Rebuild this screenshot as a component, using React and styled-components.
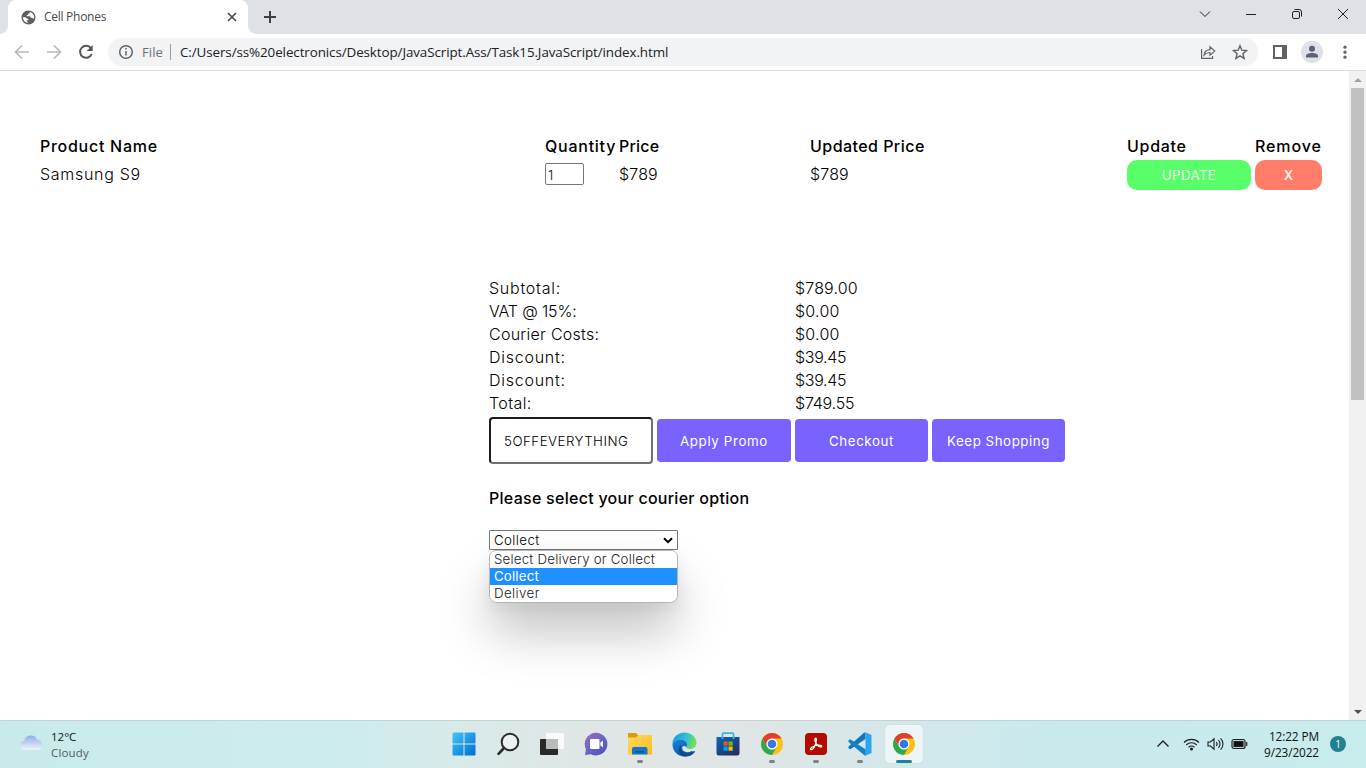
import React from "react";
import styled, { createGlobalStyle, css } from "styled-components";

const GlobalStyle = createGlobalStyle`
  * { box-sizing: border-box; }
  body { margin: 0; background: #fff; overflow: hidden; }
  svg { display: block; flex: none; }
`;

const Screen = styled.div`
  width: 1366px;
  height: 768px;
  display: flex;
  flex-direction: column;
  overflow: hidden;
  background: #fff;
  font-family: "Open Sans", "Noto Sans", sans-serif;
`;

/* Browser frame */
const TabStrip = styled.header`
  height: 34px;
  flex: none;
  display: flex;
  background: #dee1e6;
  padding-left: 8px;
`;
const Tab = styled.div`
  position: relative;
  width: 240px;
  height: 34px;
  background: #fff;
  border-radius: 8px 8px 0 0;
  display: flex;
  align-items: center;
  padding: 0 10px 0 13px;
  &::before, &::after {
    content: "";
    position: absolute;
    bottom: 0;
    width: 8px;
    height: 8px;
  }
  &::before { left: -8px; background: radial-gradient(circle at 0 0, transparent 7.5px, #fff 8px); }
  &::after { right: -8px; background: radial-gradient(circle at 100% 0, transparent 7.5px, #fff 8px); }
`;
const TabTitle = styled.span`
  flex: 1;
  margin-left: 8px;
  font-size: 12px;
  line-height: 16px;
  letter-spacing: -0.27px;
  color: #45494d;
`;
const NewTab = styled.div`
  margin: 10px 0 0 15px;
`;
const WindowButtons = styled.div`
  margin-left: auto;
  display: flex;
  height: 28px;
`;
const WindowButton = styled.div`
  width: 46px;
  display: grid;
  place-items: center;
`;
const Toolbar = styled.div`
  height: 37px;
  flex: none;
  display: flex;
  align-items: center;
  border-bottom: 1px solid #d9dbde;
  padding-left: 13px;
`;
const NavIcon = styled.div`
  width: 32px;
`;
const AddressBar = styled.div`
  margin-left: -1px;
  width: 1150px;
  height: 28px;
  border-radius: 14px;
  background: #f1f3f4;
  display: flex;
  align-items: center;
  padding: 0 10px 0 10px;
`;
const Scheme = styled.span`
  width: 28px;
  margin-left: 8px;
  font-size: 13px;
  letter-spacing: 0.1px;
  color: #6b7075;
`;
const Divider = styled.i`
  width: 1px;
  height: 16px;
  background: #9a9ea3;
`;
const Url = styled.span`
  flex: 1;
  margin-left: 9px;
  font-size: 13.4px;
  letter-spacing: -0.09px;
  color: #202124;
  white-space: nowrap;
`;
const AddressActions = styled.div`
  display: flex;
  gap: 15px;
`;
const Avatar = styled.div`
  width: 22px;
  height: 22px;
  margin: 0 20px 0 14px;
  border-radius: 50%;
  background: #dee1e6;
  display: grid;
  place-items: center;
`;
const PanelIcon = styled.div`
  width: 14px;
  height: 14px;
  margin-left: 15px;
  border: 2px solid #5f6368;
  border-right-width: 5px;
`;

/* Page */
const Viewport = styled.div`
  height: 649px;
  flex: none;
  display: flex;
`;
const Page = styled.main`
  width: 1349px;
  padding: 64px 0 0 40px;
  font-family: Inter, "Open Sans", sans-serif;
  font-size: 16px;
  color: #000;
`;
const text = css`
  letter-spacing: ${(p) => p.$track || 0}px;
  white-space: nowrap;
`;
const CartGrid = styled.section`
  display: grid;
  grid-template-columns: 505px 74px 191px 317px 128px 67px;
  grid-template-rows: 25px 30px;
  align-items: center;
`;
const Heading = styled.span`
  ${text}
  padding-bottom: 3px;
  font-weight: 500;
  font-size: 16px;
`;
const Value = styled.span`
  ${text}
  font-weight: 300;
`;
const CartValue = styled(Value)`
  padding-bottom: 2px;
`;
const QuantityInput = styled.input`
  width: 39px;
  height: 22px;
  margin-bottom: 2px;
  border: 1px solid #767676;
  border-radius: 2px;
  padding: 2px 2px 0;
  font: 300 13.3px Inter, sans-serif;
  color: #111;
  outline: none;
`;
const RowButton = styled.button`
  width: ${(p) => p.$width}px;
  height: 30px;
  border: 0;
  border-radius: 10px;
  background: ${(p) => p.$color};
  color: rgba(255, 255, 255, 0.92);
  font: ${(p) => p.$weight || 400} 13.3px Inter, sans-serif;
  padding: 0;
  ${text}
`;
const Checkout = styled.section`
  margin: 86px 0 0 449px;
`;
const TotalsGrid = styled.div`
  display: grid;
  grid-template-columns: 306px 1fr;
  grid-auto-rows: 23px;
  align-items: center;
`;
const Actions = styled.div`
  display: flex;
  align-items: center;
  gap: 4px;
  margin-top: 3px;
`;
const PromoInput = styled.input`
  width: 164px;
  height: 47px;
  border: 2px solid;
  border-color: #1d1d1d #707070 #707070 #1d1d1d;
  border-radius: 4px;
  padding: 0 13px;
  font: 300 13.3px Inter, sans-serif;
  letter-spacing: ${(p) => p.$track}px;
  color: #000;
  outline: none;
`;
const ActionButton = styled.button`
  width: ${(p) => p.$width || 133}px;
  height: 43px;
  border: 0;
  border-radius: 4px;
  background: #7863ff;
  color: #fff;
  font: 400 13.3px Inter, sans-serif;
  padding: 0;
  ${text}
`;
const CourierTitle = styled.h4`
  ${text}
  margin: 23px 0 20px;
  font-size: 16px;
  line-height: 23px;
  font-weight: 500;
`;
const Select = styled.div`
  position: relative;
  width: 189px;
  height: 20px;
  border: 1px solid #767676;
  border-radius: 1px;
  display: flex;
  align-items: center;
  justify-content: space-between;
  padding: 0 3px 0 4px;
  font-size: 13.3px;
  font-weight: 300;
`;
const Menu = styled.div`
  position: absolute;
  left: -1px;
  top: 19px;
  width: 189px;
  border: 1px solid #b4b4b4;
  border-radius: 7px 7px 8px 8px;
  background: #fff;
  overflow: hidden;
  box-shadow: 0 30px 50px -2px rgba(0, 0, 0, 0.26), 0 6px 14px rgba(0, 0, 0, 0.07);
`;
const Option = styled.div`
  ${text}
  height: 17px;
  line-height: 17px;
  padding-left: 4px;
  background: ${(p) => (p.$active ? "#1e90ff" : "#fff")};
  color: ${(p) => (p.$active ? "#fff" : "#222")};
  font-weight: ${(p) => (p.$active ? 400 : 300)};
`;
const Scrollbar = styled.aside`
  width: 17px;
  background: #f1f1f1;
  display: flex;
  flex-direction: column;
  align-items: center;
`;
const ScrollThumb = styled.div`
  width: 13px;
  height: 312px;
  background: #c1c1c1;
  margin-bottom: auto;
`;
const ScrollArrow = styled.div`
  height: 17px;
  display: grid;
  place-items: center;
`;

/* Taskbar */
const Taskbar = styled.footer`
  height: 48px;
  flex: none;
  display: flex;
  align-items: center;
  border-top: 1px solid #c2d4d4;
  padding-bottom: 1px;
  background: linear-gradient(90deg, #c8ebea 0, #cdeced 25%, #d8eaea 33%, #e0e6e6 43%, #e0e5e5 54%, #d6e7e9 64%, #c9eaed 76%, #c8ebec 100%);
`;
const Weather = styled.div`
  width: 443px;
  display: flex;
  align-items: center;
  padding: 1px 0 0 19px;
  gap: 7px;
  font-size: 11.5px;
  line-height: 16px;
  color: #111;
`;
const Muted = styled.div`
  color: #4d5c5c;
  letter-spacing: 0.15px;
`;
const TaskApp = styled.div`
  position: relative;
  width: 38px;
  height: 38px;
  margin: 0 6px 0 0;
  flex: none;
  display: grid;
  place-items: center;
  border-radius: 4px;
  margin-left: ${(p) => (p.$first ? 2 : 0)}px;
  background: ${(p) => (p.$active ? "#edf5f6" : "transparent")};
  box-shadow: ${(p) => (p.$active ? "0 0 1px #a9bbbd" : "none")};
  ${(p) => p.$mark && css`
    &::after {
      content: "";
      position: absolute;
      left: 50%;
      bottom: 0;
      height: 3px;
      width: ${p.$active ? 16 : 6}px;
      transform: translateX(-50%);
      border-radius: 2px;
      background: ${p.$active ? "#1f8294" : "#7d8283"};
    }
  `}
`;
const Tray = styled.div`
  margin-left: auto;
  display: flex;
  align-items: center;
  padding-right: 20px;
`;
const TrayIcon = styled.div`
  margin-right: ${(p) => p.$gap}px;
`;
const Clock = styled.div`
  width: 71px;
  text-align: right;
  font-size: 11.8px;
  line-height: 16px;
  letter-spacing: -0.1px;
  color: #111;
`;
const Notice = styled.div`
  width: 16px;
  height: 16px;
  margin-left: 11px;
  border-radius: 50%;
  background: #22808f;
  color: #fff;
  font-size: 10px;
  line-height: 16px;
  text-align: center;
`;

const Stroke = ({ w, h = w, color = "#202124", sw = 1, children }) => (
  <svg width={w} height={h} viewBox={`0 0 ${w} ${h}`} fill="none" stroke={color} strokeWidth={sw}>
    {children}
  </svg>
);

const Globe = () => (
  <svg width="15" height="15" viewBox="0 0 15 15">
    <circle cx="7.5" cy="7.5" r="7" fill="#5b5f64" />
    <path d="M8.800 1.900c.2 1-.6 1.600-1.600 1.600.2 1.200-.5 1.500-1.400 1.500v1.300h2.700c.9 0 1.100.6 1.100 1.500h1c.9 0 1.100.5 1.400 1.200.7-.5 1.100-1 1.200-1.500a5.800 5.800 0 0 0-4.400-5.600zM1.800 7.200a5.800 5.800 0 0 0 5 5.900v-1.400c-.8 0-1.300-.6-1.300-1.500h2c.1-1.500-1-1.600-2-1.600-.1-.9-.7-1.400-1.500-1.400z" fill="#fff" />
  </svg>
);

const Chrome = () => (
  <svg width="24" height="24" viewBox="0 0 24 24">
    <circle cx="12" cy="12" r="11" fill="#fbc116" />
    <path d="M2.5 6.5A11 11 0 0 1 21.5 6.5H12A5.5 5.5 0 0 0 7.2 14.7z" fill="#e33b2e" />
    <path d="M2.5 6.5 7.2 14.7A5.5 5.5 0 0 0 16.8 14.7L12 23A11 11 0 0 1 2.5 6.5z" fill="#2da94f" />
    <circle cx="12" cy="12" r="5.5" fill="#fff" />
    <circle cx="12" cy="12" r="4.3" fill="#3478e5" />
  </svg>
);

const Windows = () => (
  <svg width="24" height="24" viewBox="0 0 24 24">
    <defs><linearGradient id="win" gradientUnits="userSpaceOnUse" x1="0" y1="0" x2="24" y2="24"><stop stopColor="#43c8fa" /><stop offset="1" stopColor="#0069cf" /></linearGradient></defs>
    <path d="M.5 1.5a1 1 0 0 1 1-1h10v11H.5zM12.5.5h10a1 1 0 0 1 1 1v10h-11zM.5 12.5h11v11h-10a1 1 0 0 1-1-1zM12.5 12.5h11v10a1 1 0 0 1-1 1h-10z" fill="url(#win)" />
  </svg>
);

const Search = () => (
  <Stroke w={24} color="#2b2b2b" sw={2}>
    <circle cx="14" cy="10" r="8.3" fill="#edf1f1" /><path d="M8 16 2.5 21.800" strokeWidth="2.6" strokeLinecap="round" />
  </Stroke>
);

const TaskView = () => (
  <svg width="24" height="24" viewBox="0 0 24 24">
    <rect x="0" y="7" width="18" height="16" rx="1" fill="#292a27" />
    <rect x="6" y="1" width="18" height="16" rx="1" fill="#fafafa" />
    <path d="M6 7h12v10H7a1 1 0 0 1-1-1z" fill="#b9bbba" />
  </svg>
);

const Chat = () => (
  <svg width="24" height="24" viewBox="0 0 24 24">
    <defs><linearGradient id="chat" x1="0" y1="0" x2=".8" y2="1"><stop stopColor="#a06bb2" /><stop offset=".55" stopColor="#6667c8" /><stop offset="1" stopColor="#4e50bd" /></linearGradient></defs>
    <path d="M12 .8a11.3 11.3 0 1 1-5 21.4L1 23l.9-6A11.3 11.3 0 0 1 12 .8z" fill="url(#chat)" />
    <rect x="6" y="7" width="9.5" height="10" rx="1" fill="#fff" /><path d="M16.3 10.8 19 8.5v7l-2.7-2.3z" fill="#fff" />
  </svg>
);

const Folder = () => (
  <svg width="24" height="24" viewBox="0 0 24 24">
    <defs><linearGradient id="fold" x1="0" y1="0" x2="1" y2="1"><stop stopColor="#ffda62" /><stop offset="1" stopColor="#fcbc18" /></linearGradient></defs>
    <path d="M0 2a1 1 0 0 1 1-1h7l2 2v4H0z" fill="#dc9a03" />
    <path d="M0 5.5h8L10.3 3H23a1 1 0 0 1 1 1v18.5H1a1 1 0 0 1-1-1z" fill="url(#fold)" />
    <path d="M4 22.5V17a2 2 0 0 1 2-2h11.5a2 2 0 0 1 2 2v5.5z" fill="#1177cb" /><path d="M7.5 19h8.5v1.500H7.5z" fill="#07519e" />
  </svg>
);

const Edge = () => (
  <svg width="25" height="25" viewBox="0 0 24 24">
    <defs>
      <linearGradient id="e1" x1="0" x2="1" y1=".1" y2=".4"><stop stopColor="#1699dc" /><stop offset=".6" stopColor="#32c1d4" /><stop offset="1" stopColor="#72df58" /></linearGradient>
      <linearGradient id="e2" x1="0" x2=".6" y1="0" y2="1"><stop stopColor="#1687d9" /><stop offset="1" stopColor="#0d55a8" /></linearGradient>
    </defs>
    <path d="M.5 12C0 5.5 5.5.5 12 .5c7 0 11.5 5 11.5 9.8 0 4-2.8 6-6.2 6-2.7 0-4-1-3.8-1.8.3-.7 1-1 1-2.6 0-2.2-2.2-4.7-5.8-4.7C4.6 7.2 1.5 9.4.5 12z" fill="url(#e1)" />
    <path d="M.5 12c1-3.2 4.5-4.8 8.2-4.8 3.3 0 5.8 2.3 5.8 4.7 0 1.1-.4 1.9-1 2.6-1-1.8-3.7-1.5-3.7.9 0 3.5 4.800 5.300 9.100 2.800l3 1A12 12 0 0 1 12 23.5C5.5 23.5.5 18.5.5 12z" fill="url(#e2)" />
    <path d="M9.2 12.2c-2 4 1.2 8.5 6.3 8.4 2.4 0 4.4-1 5.9-2.3.4-.3.9 0 .6.5A11.5 11.5 0 0 1 12 23.5c-6.3-1.3-7.2-8.5-2.8-11.3z" fill="#10488f" />
  </svg>
);

const Store = () => (
  <svg width="24" height="24" viewBox="0 0 24 24">
    <defs><linearGradient id="store" x1="0" y1="0" x2=".7" y2="1"><stop stopColor="#0a68b9" /><stop offset="1" stopColor="#203360" /></linearGradient></defs>
    <path d="M.5 5h23v16a2.5 2.5 0 0 1-2.5 2.5H3A2.5 2.5 0 0 1 .5 21z" fill="url(#store)" />
    <path d="M6.500 7V2.200a1 1 0 0 1 1-1h9a1 1 0 0 1 1 1V7" fill="none" stroke="#36b7e9" strokeWidth="1.8" />
    <path d="M7.5 9.5h4.2v4.2H7.5z" fill="#f25022" /><path d="M12.5 9.5h4.2v4.2h-4.2z" fill="#7fba00" /><path d="M7.5 14.5h4.2v4.2H7.5z" fill="#00a4ef" /><path d="M12.5 14.5h4.2v4.2h-4.2z" fill="#ffb900" />
  </svg>
);

const Acrobat = () => (
  <svg width="24" height="24" viewBox="0 0 24 24">
    <rect x="1" y="1" width="22" height="22" rx="4" fill="#b30b00" />
    <path d="M11.6 6.2c1.2 0 .7 2.9.4 4.1-.8 3.1-2.7 6.6-4.2 7.2-1.7.7-2-1 .1-2.300 2.200-1.400 6.200-2.300 8.500-1.900 2 .4 1.500 2-.2 1.600-2.200-.5-5.200-4.200-5.300-6.700 0-1 .1-2 .7-2z" fill="none" stroke="#fff" strokeWidth="1.3" />
  </svg>
);

const Code = () => (
  <svg width="24" height="24" viewBox="0 0 24 24">
    <path d="M17.500.3v6.600L2.300 17.200.5 16.200v-1.600L16 .8z" fill="#1676b5" />
    <path d="M.5 8.300 2.300 7.200 17.800 17.500v6.200c-.8 0-1.200-.3-1.700-.8L.5 9.900z" fill="#1183c8" />
    <path d="M17.500.3 23.500 3v18l-6 2.700z" fill="#2ba5ec" />
  </svg>
);

const APPS = [
  { key: "start", Icon: Windows },
  { key: "search", Icon: Search },
  { key: "tasks", Icon: TaskView },
  { key: "chat", Icon: Chat },
  { key: "files", Icon: Folder, mark: true },
  { key: "edge", Icon: Edge },
  { key: "store", Icon: Store },
  { key: "chrome", Icon: Chrome, mark: true },
  { key: "acrobat", Icon: Acrobat, mark: true },
  { key: "code", Icon: Code, mark: true },
  { key: "chrome-active", Icon: Chrome, mark: true, active: true },
];

const TOTALS = [
  ["Subtotal:", "$789.00", 0.75, 0.15],
  ["VAT @ 15%:", "$0.00", -0.15, 0.25],
  ["Courier Costs:", "$0.00", 0.27, 0.25],
  ["Discount:", "$39.45", 0.75, -0.3],
  ["Discount:", "$39.45", 0.75, -0.3],
  ["Total:", "$749.55", 0.4, -0.2],
];

function BrowserFrame() {
  return (
    <>
      <TabStrip>
        <Tab>
          <Globe />
          <TabTitle>Cell Phones</TabTitle>
          <Stroke w={12} color="#45494d" sw={1.6}><path d="m2 2 8 8M10 2l-8 8" /></Stroke>
        </Tab>
        <NewTab><Stroke w={14} color="#3c4043" sw={2}><path d="M7 1v12M1 7h12" /></Stroke></NewTab>
        <WindowButtons>
          <WindowButton><Stroke w={12}><path d="m1 3.5 5 5 5-5" /></Stroke></WindowButton>
          <WindowButton><Stroke w={10}><path d="M0 5.5h10" /></Stroke></WindowButton>
          <WindowButton><Stroke w={12}><rect x="1.5" y="3.5" width="7" height="7" rx="1.5" /><path d="M3.5 1.5H8A2.5 2.5 0 0 1 10.5 4v4.5" /></Stroke></WindowButton>
          <WindowButton><Stroke w={12}><path d="m1 1 10 10M11 1 1 11" /></Stroke></WindowButton>
        </WindowButtons>
      </TabStrip>
      <Toolbar>
        <NavIcon><Stroke w={18} color="#b8babc" sw={1.7}><path d="M16 9H3M9 2.5 2.5 9 9 15.5" /></Stroke></NavIcon>
        <NavIcon><Stroke w={18} color="#b8babc" sw={1.7}><path d="M2 9h13M9 2.5 15.5 9 9 15.5" /></Stroke></NavIcon>
        <NavIcon><Stroke w={18} color="#53575b" sw={2}><path d="M14 5.3A6 6 0 1 0 14.7 11" /><path d="M15.7 2v6H9.7z" fill="#53575b" stroke="none" /></Stroke></NavIcon>
        <AddressBar>
          <Stroke w={16} color="#5f6368" sw={1.5}><circle cx="8" cy="8" r="6.3" /><path d="M8 7v4.5M8 4v1.6" /></Stroke>
          <Scheme>File</Scheme>
          <Divider />
          <Url>C:/Users/ss%20electronics/Desktop/JavaScript.Ass/Task15.JavaScript/index.html</Url>
          <AddressActions>
            <Stroke w={17} h={16} color="#62666b" sw={1.2}><path d="M1.6 5v9.4h11V12M4 11c.6-3.6 2.8-5.2 6-5.3V2.8l4.8 4.3L10 11.2V8.5C7 8.5 5.3 9.5 4 11z" /></Stroke>
            <Stroke w={16} color="#5f6368" sw={1.4}><path d="m8 1.7 1.8 4.5 4.7.4-3.6 3.1 1.2 4.7L8 11.9l-4.1 2.5 1.2-4.7-3.6-3.1 4.7-.4z" /></Stroke>
          </AddressActions>
        </AddressBar>
        <PanelIcon />
        <Avatar>
          <svg width="14" height="14" viewBox="0 0 14 14" fill="#55627a"><circle cx="7" cy="3.8" r="3" /><path d="M1 12.5V11c0-2 3-3 6-3s6 1 6 3v1.5z" /></svg>
        </Avatar>
        <svg width="4" height="14" fill="#5f6368"><circle cx="2" cy="2.2" r="1.6" /><circle cx="2" cy="7.2" r="1.6" /><circle cx="2" cy="12.2" r="1.6" /></svg>
      </Toolbar>
    </>
  );
}

export default function App() {
  return (
    <Screen>
      <GlobalStyle />
      <BrowserFrame />
      <Viewport>
        <Page>
          <CartGrid>
            <Heading $track={0.73}>Product Name</Heading>
            <Heading $track={0.75}>Quantity</Heading>
            <Heading $track={0.2}>Price</Heading>
            <Heading $track={0.45}>Updated Price</Heading>
            <Heading $track={0.7}>Update</Heading>
            <Heading $track={0.9}>Remove</Heading>
            <CartValue $track={0.7}>Samsung S9</CartValue>
            <QuantityInput defaultValue="1" />
            <CartValue $track={0.15}>$789</CartValue>
            <CartValue $track={0.15}>$789</CartValue>
            <RowButton $width={124} $color="#58ff69" $track={0.4}>UPDATE</RowButton>
            <RowButton $width={67} $color="#ff7d69" $weight={600}>X</RowButton>
          </CartGrid>
          <Checkout>
            <TotalsGrid>
              {TOTALS.map(([label, amount, labelTrack, amountTrack], i) => (
                <React.Fragment key={i}>
                  <Value $track={labelTrack}>{label}</Value>
                  <Value $track={amountTrack}>{amount}</Value>
                </React.Fragment>
              ))}
            </TotalsGrid>
            <Actions>
              <PromoInput defaultValue="5OFFEVERYTHING" $track={0.5} />
              <ActionButton $width={134} $track={0.65}>Apply Promo</ActionButton>
              <ActionButton $track={0.6}>Checkout</ActionButton>
              <ActionButton $track={0.55}>Keep Shopping</ActionButton>
            </Actions>
            <CourierTitle $track={0.27}>Please select your courier option</CourierTitle>
            <Select>
              <Value $track={0.4}>Collect</Value>
              <Stroke w={12} color="#000" sw={2}><path d="m2 4.2 4 4 4-4" /></Stroke>
              <Menu>
                <Option $track={0.2}>Select Delivery or Collect</Option>
                <Option $track={0.15} $active>Collect</Option>
                <Option $track={0.4}>Deliver</Option>
              </Menu>
            </Select>
          </Checkout>
        </Page>
        <Scrollbar>
          <ScrollArrow><svg width="8" height="4"><path d="M0 4 4 0l4 4z" fill="#a3a3a3" /></svg></ScrollArrow>
          <ScrollThumb />
          <ScrollArrow><svg width="8" height="4"><path d="m0 0 4 4 4-4z" fill="#505050" /></svg></ScrollArrow>
        </Scrollbar>
      </Viewport>
      <Taskbar>
        <Weather>
          <svg width="25" height="20" viewBox="0 0 25 20">
            <defs><linearGradient id="cloud" x1="0" y1="0" x2="0" y2="1"><stop stopColor="#8fafe9" /><stop offset="1" stopColor="#f1f3fa" /></linearGradient></defs>
            <path d="M5.5 15a4.700 4.700 0 0 1-.3-9.300A6.800 6.800 0 0 1 18 4.600a5.300 5.300 0 0 1 1 10.400z" fill="url(#cloud)" />
          </svg>
          <div><div>12°C</div><Muted>Cloudy</Muted></div>
        </Weather>
        {APPS.map(({ key, Icon, mark, active }, i) => (
          <TaskApp key={key} $first={i === 0} $mark={mark} $active={active}><Icon /></TaskApp>
        ))}
        <Tray>
          <TrayIcon $gap={13}><Stroke w={14} h={12} sw={1.4}><path d="m1.5 8.5 5.5-5.5 5.5 5.5" /></Stroke></TrayIcon>
          <TrayIcon $gap={7}>
            <Stroke w={17} h={14} sw={1.1}><path d="M1 5.5a10.5 10.5 0 0 1 15 0M3.2 8a7.5 7.5 0 0 1 10.6 0M5.5 10.3a4.3 4.3 0 0 1 6 0" /><circle cx="8.5" cy="12" r="1" fill="#202124" /></Stroke>
          </TrayIcon>
          <TrayIcon $gap={7}>
            <Stroke w={17} h={14} sw={1.1}><path d="M1 5h2.5L7 1.8v10.4L3.5 9H1zM9.3 5a3 3 0 0 1 0 4M11.5 3.2a5.5 5.5 0 0 1 0 7.6M13.6 1.3a8 8 0 0 1 0 11.4" /></Stroke>
          </TrayIcon>
          <TrayIcon $gap={0}>
            <Stroke w={17} h={12} sw={1.2}><rect x="1" y="1.5" width="13" height="9" rx="2" /><rect x="3" y="3.5" width="9" height="5" fill="#111" /><path d="M15.7 4v4" /></Stroke>
          </TrayIcon>
          <Clock><div>12:22 PM</div><div>9/23/2022</div></Clock>
          <Notice>1</Notice>
        </Tray>
      </Taskbar>
    </Screen>
  );
}
